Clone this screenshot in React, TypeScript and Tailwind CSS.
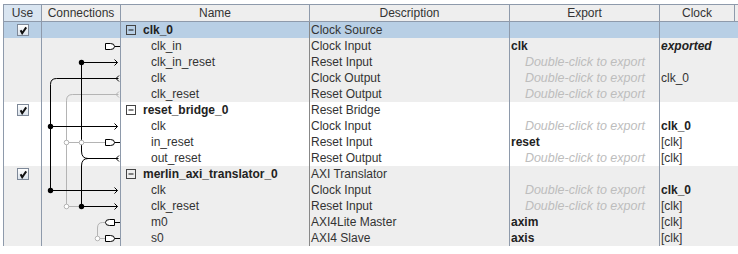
type Exp = { text: string; kind: "bold" | "hint" };
type Clk = { text: string; kind: "normal" | "bold" | "boldItalic" };
type Row = {
  comp?: boolean;
  name: string;
  desc: string;
  exp?: Exp;
  clock?: Clk;
  bg: string;
};

const hint: Exp = { text: "Double-click to export", kind: "hint" };

const rows: Row[] = [
  { comp: true, name: "clk_0", desc: "Clock Source", bg: "bg-[#b8cfe5]" },
  { name: "clk_in", desc: "Clock Input", exp: { text: "clk", kind: "bold" }, clock: { text: "exported", kind: "boldItalic" }, bg: "bg-[#eeeeee]" },
  { name: "clk_in_reset", desc: "Reset Input", exp: hint, bg: "bg-[#eeeeee]" },
  { name: "clk", desc: "Clock Output", exp: hint, clock: { text: "clk_0", kind: "normal" }, bg: "bg-[#eeeeee]" },
  { name: "clk_reset", desc: "Reset Output", exp: hint, bg: "bg-[#eeeeee]" },
  { comp: true, name: "reset_bridge_0", desc: "Reset Bridge", bg: "bg-white" },
  { name: "clk", desc: "Clock Input", exp: hint, clock: { text: "clk_0", kind: "bold" }, bg: "bg-white" },
  { name: "in_reset", desc: "Reset Input", exp: { text: "reset", kind: "bold" }, clock: { text: "[clk]", kind: "normal" }, bg: "bg-white" },
  { name: "out_reset", desc: "Reset Output", exp: hint, clock: { text: "[clk]", kind: "normal" }, bg: "bg-white" },
  { comp: true, name: "merlin_axi_translator_0", desc: "AXI Translator", bg: "bg-[#eeeeee]" },
  { name: "clk", desc: "Clock Input", exp: hint, clock: { text: "clk_0", kind: "bold" }, bg: "bg-[#eeeeee]" },
  { name: "clk_reset", desc: "Reset Input", exp: hint, clock: { text: "[clk]", kind: "normal" }, bg: "bg-[#eeeeee]" },
  { name: "m0", desc: "AXI4Lite Master", exp: { text: "axim", kind: "bold" }, clock: { text: "[clk]", kind: "normal" }, bg: "bg-[#eeeeee]" },
  { name: "s0", desc: "AXI4 Slave", exp: { text: "axis", kind: "bold" }, clock: { text: "[clk]", kind: "normal" }, bg: "bg-[#eeeeee]" },
];

const Check = () => (
  <div className="w-[12px] h-[12px] border border-[#7d8898] bg-gradient-to-b from-white to-[#dbe3ec] flex items-center justify-center">
    <svg width="10" height="10" viewBox="0 0 10 10">
      <path d="M2.6 5.2 L4.2 8.2 L8.2 2.4" fill="none" stroke="#111" strokeWidth="2" />
    </svg>
  </div>
);

const MinusBox = () => (
  <svg width="10" height="10" viewBox="0 0 10 10" className="shrink-0">
    <rect x="0.5" y="0.5" width="9" height="9" fill="none" stroke="#444" />
    <path d="M2.5 5 H7.5" stroke="#111" />
  </svg>
);

const Header = () => {
  const cell = "h-[18px] border-l border-t border-b border-[#8e9aab] flex items-center justify-center";
  return (
    <div className="flex bg-[#eeeeee] text-[#333]">
      <div className={`${cell} w-[38px] bg-[#d9e5f1]`}>Use</div>
      <div className={`${cell} w-[79px]`}>Connections</div>
      <div className={`${cell} w-[189px]`}>Name</div>
      <div className={`${cell} w-[200px]`}>Description</div>
      <div className={`${cell} w-[150px]`}>Export</div>
      <div className={`${cell} w-[75px]`}>Clock</div>
      <div className={`${cell} w-[4px]`}></div>
    </div>
  );
};

const ClockText = ({ c }: { c?: Clk }) => {
  if (!c) return null;
  const cls = c.kind === "bold" ? "font-bold text-[#222]" : c.kind === "boldItalic" ? "font-bold italic text-[#222]" : "text-[#333]";
  return <span className={cls}>{c.text}</span>;
};

const Wires = () => {
  const k = "#000";
  const g = "#b4b4b4";
  const arrowR = (y: number) => `M114.5 ${y - 3} L117.5 ${y} L114.5 ${y + 3}`;
  const arrowL = (y: number) => `M119 ${y - 3} L116 ${y} L119 ${y + 3}`;
  const portR = (y: number) => `M105.5 ${y - 3} H110.5 Q114.5 ${y - 3} 114.5 ${y} Q114.5 ${y + 3} 110.5 ${y + 3} H105.5 Z`;
  const portL = (y: number) => `M114.5 ${y - 3} H109.5 Q105.5 ${y - 3} 105.5 ${y} Q105.5 ${y + 3} 109.5 ${y + 3} H114.5 Z`;
  return (
    <svg className="absolute top-0 left-0 pointer-events-none" width="735" height="224" viewBox="3 22 735 224">
      <g fill="none" strokeWidth="1">
        {/* gray lines */}
        <path d="M66.5 204 V100.5 Q66.5 94.5 72.5 94.5 H118.5" stroke={g} />
        <path d={arrowL(94.5)} stroke={g} />
        <path d="M66.5 142.5 H105.5" stroke={g} />
        <path d="M66.5 206.5 H81.5" stroke={g} />
        <path d="M105.5 222.5 H102.5 Q97.5 222.5 97.5 228 V236" stroke={g} />
        <path d="M97.5 238.5 H105.5" stroke={g} />
        {/* black lines */}
        <path d="M50.5 190.5 V84.5 Q50.5 78.5 56.5 78.5 H118.5" stroke={k} />
        <path d={arrowL(78.5)} stroke={k} />
        <path d="M81.5 62.5 V151 Q81.5 158.5 88 158.5 H118.5 M81.5 166 Q81.5 158.5 88 158.5 M81.5 166 V206.5" stroke={k} />
        <path d={arrowL(158.5)} stroke={k} />
        <path d="M81.5 62.5 H117.5" stroke={k} />
        <path d={arrowR(62.5)} stroke={k} />
        <path d="M50.5 126.5 H117.5" stroke={k} />
        <path d={arrowR(126.5)} stroke={k} />
        <path d="M50.5 190.5 H117.5" stroke={k} />
        <path d={arrowR(190.5)} stroke={k} />
        <path d="M81.5 206.5 H117.5" stroke={k} />
        <path d={arrowR(206.5)} stroke={k} />
        {/* ports */}
        <path d="M114.5 46.5 H120" stroke={k} />
        <path d={portR(46.5)} stroke={k} fill="#fff" />
        <path d="M114.5 142.5 H120" stroke={k} />
        <path d={portR(142.5)} stroke={k} fill="#fff" />
        <path d="M114.5 222.5 H120" stroke={k} />
        <path d={portL(222.5)} stroke={k} fill="#fff" />
        <path d="M114.5 238.5 H120" stroke={k} />
        <path d={portR(238.5)} stroke={k} fill="#fff" />
      </g>
      <g>
        <circle cx="81.5" cy="62.5" r="2.7" fill={k} />
        <circle cx="50.5" cy="126.5" r="2.7" fill={k} />
        <circle cx="50.5" cy="190.5" r="2.7" fill={k} />
        <circle cx="81.5" cy="206.5" r="2.7" fill={k} />
        <circle cx="66.5" cy="142.5" r="2.3" fill="#fff" stroke={g} />
        <circle cx="81.5" cy="142.5" r="2.3" fill="#fff" stroke={g} />
        <circle cx="66.5" cy="206.5" r="2.3" fill="#fff" stroke={g} />
        <circle cx="97.5" cy="238.5" r="2.3" fill="#fff" stroke={g} />
      </g>
    </svg>
  );
};

export default function App() {
  const line = "border-l border-[#8e9aab]";
  return (
    <div className="w-[738px] h-[254px] bg-white pt-[4px] pl-[3px] font-['Liberation_Sans',Arial,sans-serif] text-[12px] leading-[16px] text-[#333]">
      <div className="w-[735px]">
        <Header />
        <div className="relative">
          {rows.map((r, i) => (
            <div key={i} className={`flex h-[16px] ${r.bg}`}>
              <div className={`${line} w-[38px] flex items-center justify-center`}>{r.comp && <Check />}</div>
              <div className={`${line} w-[79px]`}></div>
              <div className={`${line} w-[189px] flex items-center whitespace-nowrap`}>
                {r.comp ? (
                  <div className="flex items-center pl-[5px]">
                    <MinusBox />
                    <span className="ml-[7px] font-bold text-[#222]">{r.name}</span>
                  </div>
                ) : (
                  <span className="pl-[30px]">{r.name}</span>
                )}
              </div>
              <div className="border-l border-[#888] w-[200px] pl-[1px] whitespace-nowrap">{r.desc}</div>
              <div className={`${line} w-[150px] pl-[1px] whitespace-nowrap`}>
                {r.exp?.kind === "bold" && <span className="font-bold text-[#222]">{r.exp.text}</span>}
                {r.exp?.kind === "hint" && <div className="text-center italic text-[12.5px] text-[#bdbdbd]">{r.exp.text}</div>}
              </div>
              <div className={`${line} w-[75px] pl-[1px] whitespace-nowrap`}>
                <ClockText c={r.clock} />
              </div>
              <div className="w-[4px]"></div>
            </div>
          ))}
          <Wires />
        </div>
      </div>
    </div>
  );
}
